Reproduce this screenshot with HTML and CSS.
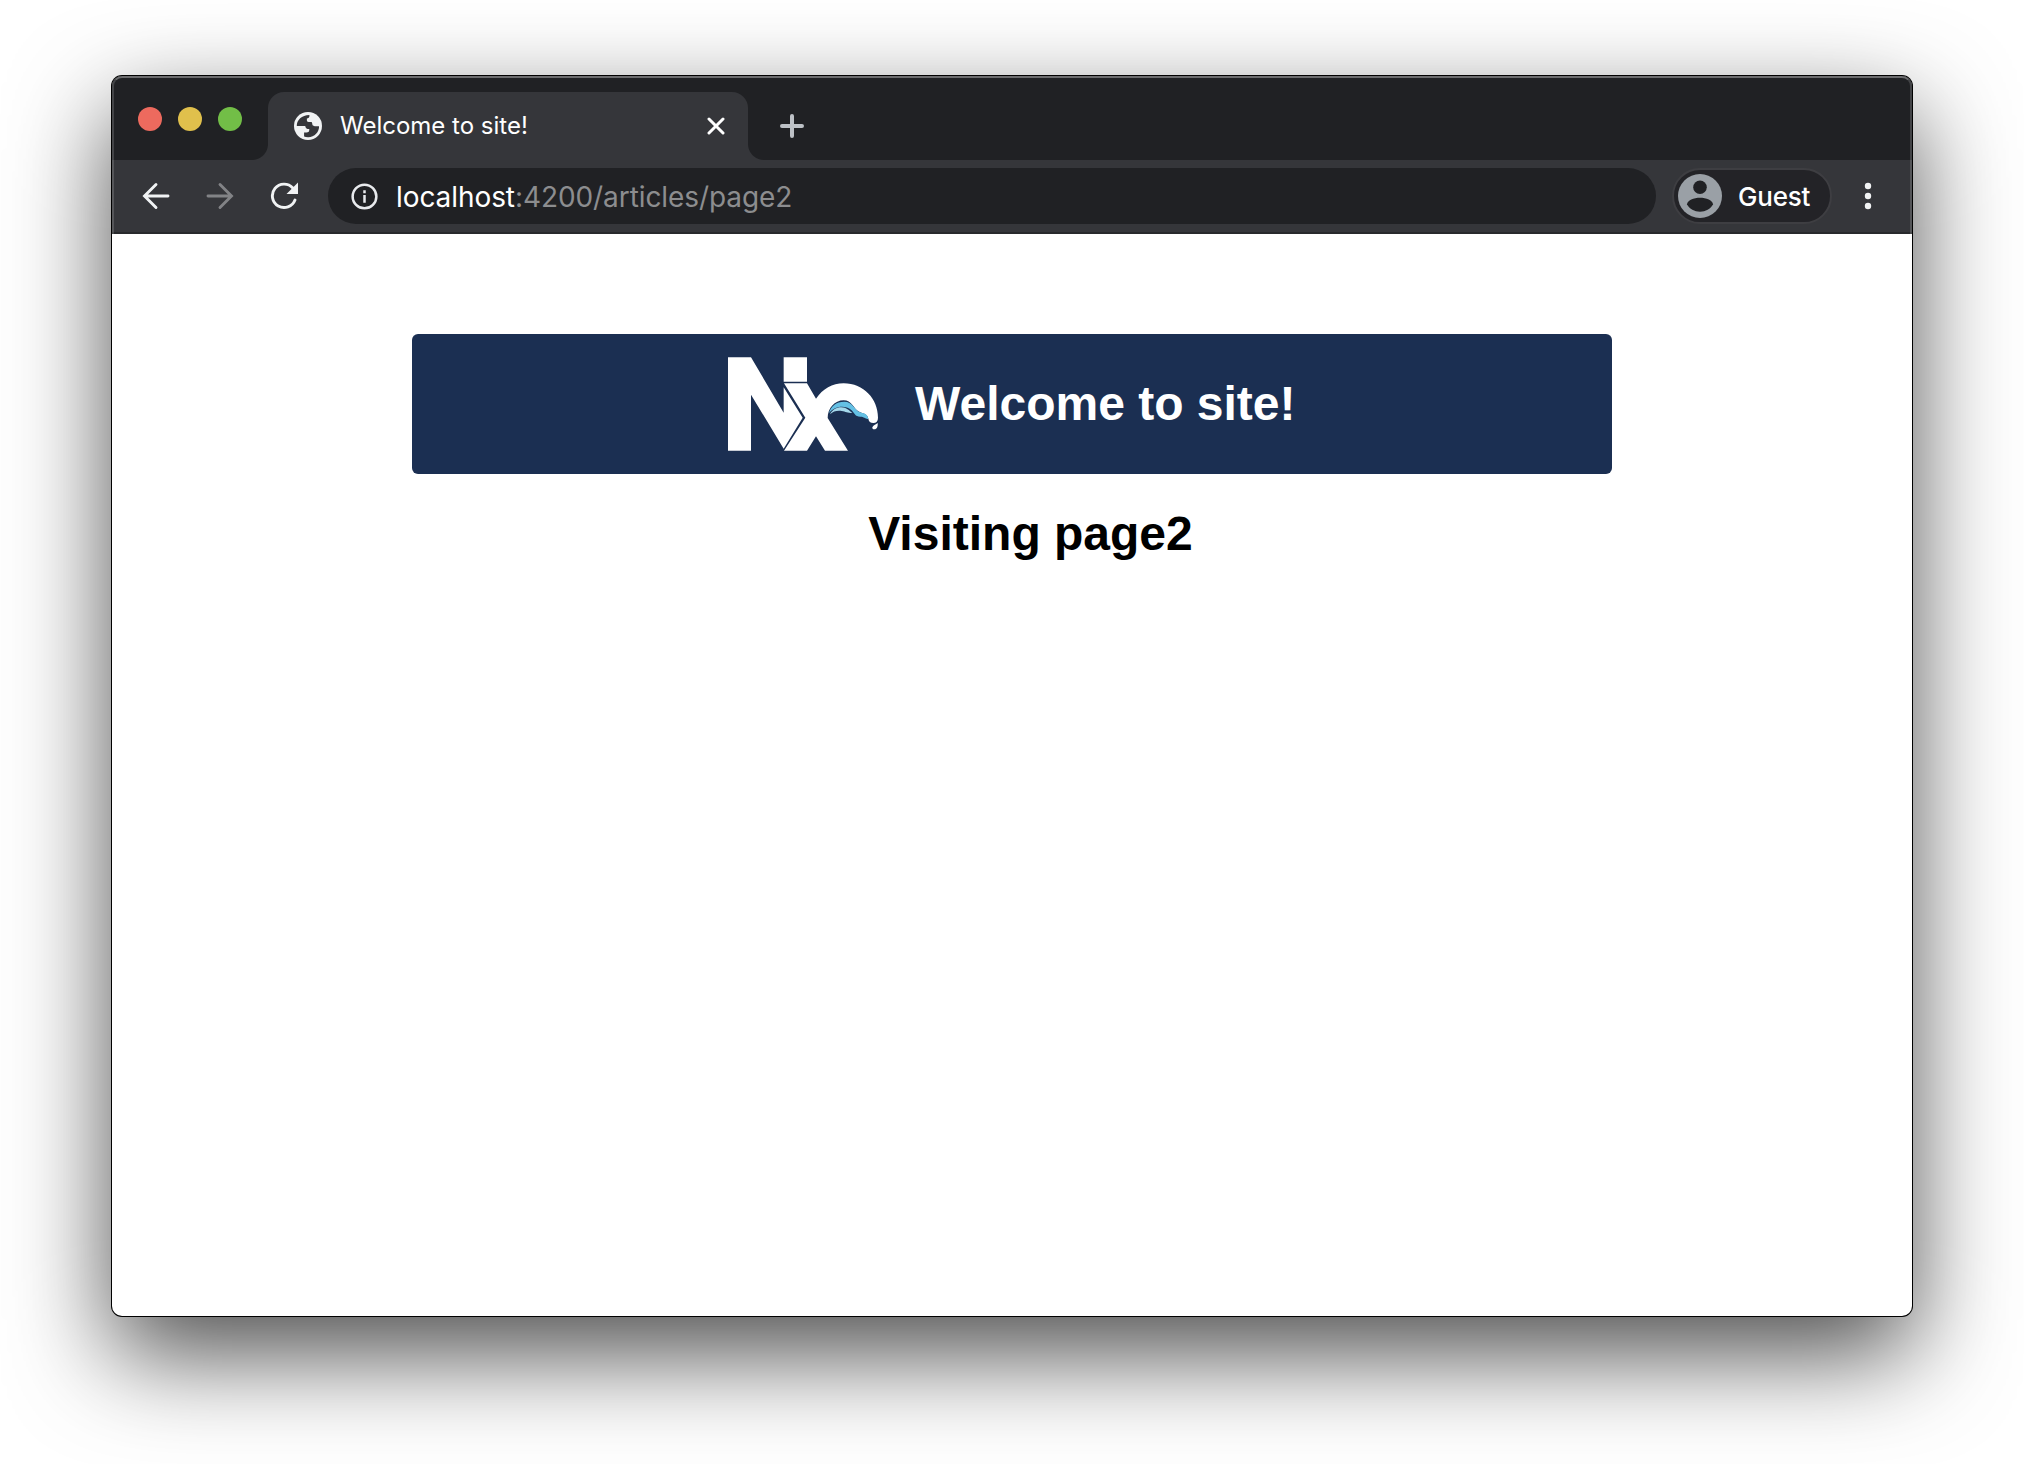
FILE: index.html
```html
<!DOCTYPE html>
<html lang="en">
<head>
<meta charset="utf-8">
<title>Welcome to site!</title>
<link rel="stylesheet" href="styles.css">
</head>
<body>
<div class="window">
  <div class="chrome">
    <div class="tab-strip">
      <div class="lights"><span class="light red"></span><span class="light yellow"></span><span class="light green"></span></div>
      <div class="tab">
        <svg class="globe" viewBox="2 2 20 20"><circle cx="12" cy="12" r="10" fill="#f1f3f4"/><path fill="#35363a" d="M4 12c-.1-4.300 3.500-7.900 9-7.900v1c0 .9-.7 1.500-1.800 1.500v1.300c0 .8.4 1.200 1.200 1.200h1.800c.5 0 .8.5.8 1.200 0 1.200.6 1.800 1.800 1.800h3.100c.2 4-3.300 8-7.900 7.900-1.100 0-2-.2-2.800-.5v-2.800h1.700c1.300 0 2-.6 2-1.800v-.7c-1.700 0-2.600-.5-2.900-2.200z"/></svg>
        <span class="tab-title">Welcome to site!</span>
        <svg class="close" viewBox="0 0 18 18"><path d="M2 2l14 14M16 2L2 16"/></svg>
      </div>
      <svg class="plus" viewBox="0 0 24 24"><path d="M12 2v20M2 12h20"/></svg>
    </div>
    <div class="toolbar">
      <svg class="nav back" viewBox="0 0 28 28"><path d="M26 14H3M14 2.500L2.500 14 14 25.500"/></svg>
      <svg class="nav forward" viewBox="0 0 28 28"><path d="M2 14h23M14 2.500L25.500 14 14 25.500"/></svg>
      <svg class="nav reload" viewBox="0 0 28 28"><path d="M25 18A11.700 11.700 0 1 1 22.800 6"/><path class="head" d="M28 .5V12H16.500z"/></svg>
      <div class="address">
        <svg class="info" viewBox="0 0 28 28"><circle cx="14" cy="14" r="12.300"/><path d="M14 12.500v8M14 7.500v3"/></svg>
        <span class="url">localhost<span class="path">:4200/articles/page2</span></span>
      </div>
      <div class="profile">
        <svg class="avatar" viewBox="0 0 44 44"><circle cx="22" cy="22" r="22" fill="#9aa0a6"/><circle cx="22" cy="13.200" r="6.800" fill="#202124"/><path fill="#202124" d="M9 30.500c0-4 7-6.700 13-6.700s13 2.700 13 6.700c-2.500 4.500-7.500 7.200-13 7.200S11.500 35 9 30.500z"/></svg>
        <span class="guest">Guest</span>
      </div>
      <svg class="dots" viewBox="0 0 8 28"><circle cx="4" cy="4" r="3.200"/><circle cx="4" cy="14" r="3.200"/><circle cx="4" cy="24" r="3.200"/></svg>
    </div>
  </div>
  <main class="page">
    <header class="banner">
      <svg class="logo" viewBox="54 51 450 280">
        <path fill="#fff" d="M54 51h69l98 166v-76l57 91-57 93L123 163v168H54zM221 51h70v73h-70z"/>
        <path fill="#fff" d="M222 129h69l27 46c20-29 49-46 83-46 60 0 103 47 103 103 0 10-5 16-14 16-9 0-14-5-15-13-4-16-18-15-30-22-14-8-20-33-44-33-27 0-48 24-48 53l61 98h-69l-27-43-27 43h-69l64-99z"/>
        <path fill="#64c0e4" d="M357 219c4-21 22-35 46-35 24 0 30 23 45 31 12 5 24 2 27 21-10-1-13-7-24-7-17 0-16-10-27-20-21-17-53-10-67 10z"/>
        <path fill="#a5d8eb" d="M360 222c7-14 19-21 34-21 16 0 23 10 33 17-15 0-20-4-32-6-14-2-25 1-35 10z"/>
        <path fill="#fff" d="M503 248c1 11-2 19-10 19-5 0-8-5-5-8 4-5 9-6 15-11z"/>
      </svg>
      <h1>Welcome to site!</h1>
    </header>
    <h1 class="visiting">Visiting page2</h1>
  </main>
</div>
</body>
</html>
```
FILE: styles.css
```css
* { box-sizing: border-box; }
body { margin: 0; background: #fff; overflow: hidden; }
svg { display: block; flex: none; }
.window {
  width: 1800px; height: 1240px; margin: 76px 112px 148px;
  background: #fff; border-radius: 10px; overflow: hidden;
  box-shadow: 0 0 0 1px #000, 0 38px 100px rgba(0,0,0,.7);
}
.chrome { position: relative; height: 158px; background: #35363a; }
.chrome::after {
  content: ""; position: absolute; inset: 0; pointer-events: none;
  border: 2px solid rgba(255,255,255,.16); border-top-color: rgba(255,255,255,.34);
  border-bottom: 0; border-radius: 10px 10px 0 0;
}
.tab-strip { display: flex; height: 84px; background: #202124; }
.lights {
  width: 156px; display: flex; gap: 16px; padding: 31px 0 0 26px;
}
.light { width: 24px; height: 24px; border-radius: 50%; }
.red { background: #ed6a5e; }
.yellow { background: #e0c04c; }
.green { background: #72be47; }
.tab {
  position: relative; width: 480px; height: 68px; margin-top: 16px;
  padding: 0 23px 0 26px; display: flex; align-items: center;
  background: #35363a; border-radius: 16px 16px 0 0;
}
.tab::before, .tab::after {
  content: ""; position: absolute; bottom: 0; width: 16px; height: 16px;
}
.tab::before { left: -16px; background: radial-gradient(circle at 0 0, #202124 15.500px, #35363a 16.500px); }
.tab::after { right: -16px; background: radial-gradient(circle at 100% 0, #202124 15.500px, #35363a 16.500px); }
.globe { width: 28px; height: 28px; }
.tab-title {
  flex: 1; margin-left: 18px; color: #fff; white-space: nowrap;
  font: 400 24px/34px Inter, sans-serif;
}
.close { width: 18px; height: 18px; fill: none; stroke: #fff; stroke-width: 3; stroke-linecap: round; }
.plus {
  width: 24px; height: 24px; margin: 38px 0 0 32px;
  fill: none; stroke: #bdc1c6; stroke-width: 4; stroke-linecap: round;
}
.toolbar {
  height: 74px; padding: 0 40px 0 30px; display: flex; align-items: center;
  border-bottom: 2px solid #28292c;
}
.nav { width: 28px; height: 28px; fill: none; stroke: #f1f3f4; stroke-width: 2.900; stroke-linecap: round; margin-right: 36px; }
.forward { stroke: #828386; }
.reload { margin-right: 30px; }
.reload .head { fill: #f1f3f4; stroke: none; }
.address {
  width: 1328px; height: 56px; padding-left: 23px;
  display: flex; align-items: center; background: #202124; border-radius: 28px;
}
.info { width: 27px; height: 27px; fill: none; stroke: #e8eaed; stroke-width: 2.600; }
.url {
  margin-left: 18px; padding-top: 1px; color: #fff; white-space: nowrap;
  font: 400 28px/36px Inter, sans-serif; letter-spacing: -.08px;
}
.path { color: #8c8d8f; }
.profile {
  width: 160px; height: 56px; margin-left: 16px; padding-left: 4px;
  display: flex; align-items: center; background: #232327;
  border: 2px solid #3e3e42; border-radius: 28px;
}
.avatar { width: 44px; height: 44px; }
.guest { margin-left: 16px; padding-top: 2px; color: #fff; font: 500 26px/34px Inter, sans-serif; letter-spacing: -.2px; }
.dots { width: 8px; height: 28px; margin-left: 32px; fill: #f1f3f4; }
.page { width: 1200px; margin: 100px auto 0; font-family: "Liberation Sans", Arial, sans-serif; }
h1 { margin: 0; font-size: 48px; line-height: 56px; font-weight: 700; white-space: nowrap; }
.banner {
  height: 140px; padding-left: 316px; display: flex; align-items: center;
  background: #1b2f52; border-radius: 6px; color: #fff;
}
.logo { width: 150px; height: 94px; }
.banner h1 { margin-left: 37px; }
.visiting { margin-top: 32px; padding-left: 37px; text-align: center; }
```
